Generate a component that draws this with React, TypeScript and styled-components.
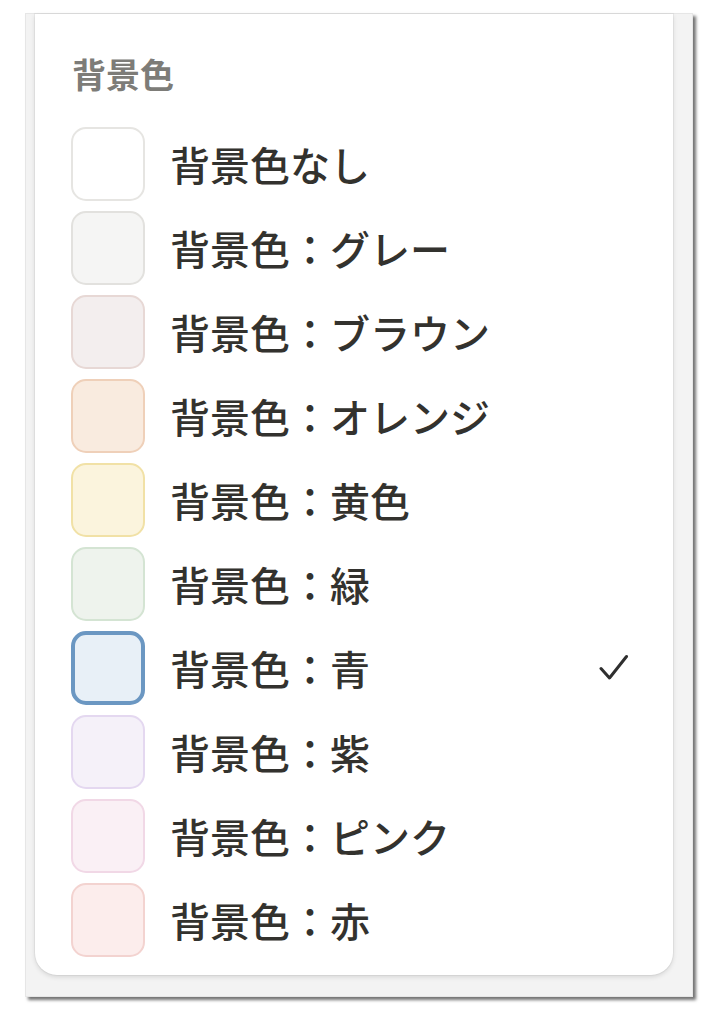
import React from "react";
import styled, { createGlobalStyle } from "styled-components";

const Global = createGlobalStyle`
  html, body { margin: 0; padding: 0; background: #ffffff; }
  body { font-family: "Noto Sans CJK JP", "Noto Sans", sans-serif; }
`;

const Page = styled.div`
  width: 716px;
  height: 1024px;
  padding: 13px 0 0 25px;
  box-sizing: border-box;
`;

const Frame = styled.div`
  width: 668px;
  height: 984px;
  box-sizing: border-box;
  background: #f3f3f3;
  border: 1px solid #e6e6e6;
  box-shadow: 3px 3px 3px rgba(0, 0, 0, 0.55);
  padding: 0 19px 0 9px;
  display: flex;
  flex-direction: column;
`;

const Card = styled.div`
  background: #ffffff;
  height: 961px;
  border-radius: 0 0 22px 22px;
  box-shadow: 0 2px 5px rgba(0, 0, 0, 0.12), 0 0 0 1px rgba(0, 0, 0, 0.04);
  padding: 5px 44px 13px 36px;
  box-sizing: border-box;
  display: flex;
  flex-direction: column;
`;

const Divider = styled.div`
  height: 1px;
  background: #ececec;
  margin: 0 -9px 0 -1px;
`;

const Heading = styled.div`
  margin: 35px 0 28px 1px;
  font-size: 34px;
  line-height: 40px;
  font-weight: 600;
  color: #7d7c78;
`;

const List = styled.div`
  display: flex;
  flex-direction: column;
`;

const Row = styled.div`
  height: 84px;
  display: flex;
  align-items: center;
  gap: 25px;
`;

const Swatch = styled.div<{ $bg: string; $bd: string; $sel?: boolean }>`
  width: 74px;
  height: 74px;
  box-sizing: border-box;
  border-radius: 15px;
  background: ${(p) => p.$bg};
  border: ${(p) => (p.$sel ? "4px" : "2px")} solid ${(p) => p.$bd};
  flex: none;
`;

const Label = styled.div`
  flex: 1;
  font-size: 40px;
  line-height: 48px;
  font-weight: 500;
  color: #33322e;
  white-space: nowrap;
`;

const Check = styled.svg`
  width: 30px;
  height: 30px;
  flex: none;
`;

const items = [
  { label: "背景色なし", bg: "#ffffff", bd: "#e6e5e2" },
  { label: "背景色：グレー", bg: "#f5f5f4", bd: "#e2e1de" },
  { label: "背景色：ブラウン", bg: "#f3eeee", bd: "#e7d8d5" },
  { label: "背景色：オレンジ", bg: "#f9ebdf", bd: "#efd0b9" },
  { label: "背景色：黄色", bg: "#fbf4dd", bd: "#f1e1a6" },
  { label: "背景色：緑", bg: "#eef3ed", bd: "#d4e4d3" },
  { label: "背景色：青", bg: "#e8f0f7", bd: "#6b97c2", sel: true },
  { label: "背景色：紫", bg: "#f5f1f9", bd: "#e4d8f0" },
  { label: "背景色：ピンク", bg: "#faf0f5", bd: "#f1d8e6" },
  { label: "背景色：赤", bg: "#fcedec", bd: "#f3d3d0" },
];

export default function App() {
  return (
    <>
      <Global />
      <Page>
        <Frame>
          <Card>
            <Divider />
            <Heading>背景色</Heading>
            <List>
              {items.map((it) => (
                <Row key={it.label}>
                  <Swatch $bg={it.bg} $bd={it.bd} $sel={it.sel} />
                  <Label>{it.label}</Label>
                  {it.sel && (
                    <Check viewBox="0 0 30 30">
                      <path
                        d="M2 15.5 L10.5 25 L27.5 3.5"
                        fill="none"
                        stroke="#2f2f2f"
                        strokeWidth="3"
                        strokeLinecap="round"
                        strokeLinejoin="round"
                      />
                    </Check>
                  )}
                </Row>
              ))}
            </List>
          </Card>
        </Frame>
      </Page>
    </>
  );
}
